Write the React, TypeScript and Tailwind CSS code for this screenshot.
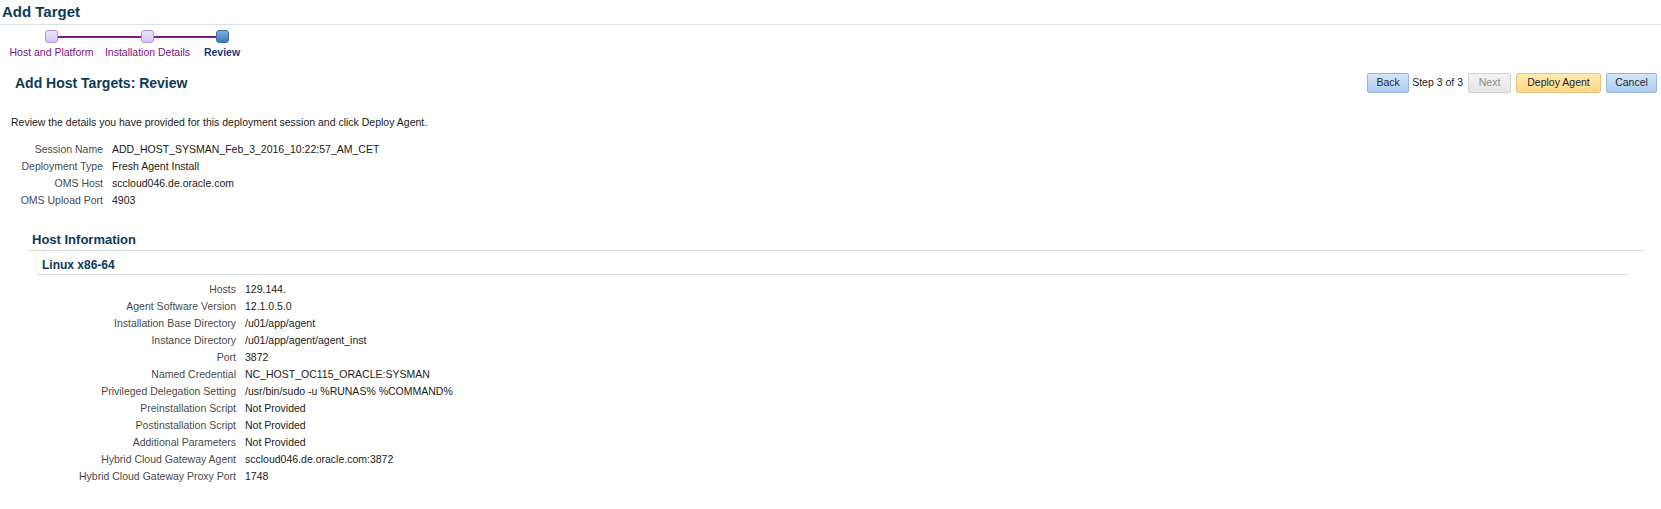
import React from "react";

const topRows: [string, string][] = [
  ["Session Name", "ADD_HOST_SYSMAN_Feb_3_2016_10:22:57_AM_CET"],
  ["Deployment Type", "Fresh Agent Install"],
  ["OMS Host", "sccloud046.de.oracle.com"],
  ["OMS Upload Port", "4903"],
];

const hostRows: [string, string][] = [
  ["Hosts", "129.144."],
  ["Agent Software Version", "12.1.0.5.0"],
  ["Installation Base Directory", "/u01/app/agent"],
  ["Instance Directory", "/u01/app/agent/agent_inst"],
  ["Port", "3872"],
  ["Named Credential", "NC_HOST_OC115_ORACLE:SYSMAN"],
  ["Privileged Delegation Setting", "/usr/bin/sudo -u %RUNAS% %COMMAND%"],
  ["Preinstallation Script", "Not Provided"],
  ["Postinstallation Script", "Not Provided"],
  ["Additional Parameters", "Not Provided"],
  ["Hybrid Cloud Gateway Agent", "sccloud046.de.oracle.com:3872"],
  ["Hybrid Cloud Gateway Proxy Port", "1748"],
];

function KV({ rows, labelW }: { rows: [string, string][]; labelW: string }) {
  return (
    <div className={`grid ${labelW} gap-x-[9px]`}>
      {rows.map(([k, v]) => (
        <React.Fragment key={k}>
          <div className="text-right text-[#4a4a4a] leading-[17px] whitespace-nowrap">{k}</div>
          <div className="text-[#1a1a1a] leading-[17px] whitespace-nowrap">{v}</div>
        </React.Fragment>
      ))}
    </div>
  );
}

function Btn({ children, kind, w }: { children: React.ReactNode; kind: "blue" | "gray" | "yellow"; w: string }) {
  const cls =
    kind === "blue"
      ? "bg-gradient-to-b from-[#d3e5f8] to-[#aecdf0] border-[#92b6dc] text-[#1c2733]"
      : kind === "yellow"
      ? "bg-gradient-to-b from-[#ffeab0] to-[#ffd783] border-[#e8c57c] text-[#1c2733]"
      : "bg-gradient-to-b from-[#f3f3f3] to-[#e6e6e6] border-[#d2d2d2] text-[#8c8c8c]";
  return (
    <div className={`${w} h-[20px] flex items-center justify-center rounded-[2px] border ${cls}`}>{children}</div>
  );
}

function Step({ label, w, ml, state }: { label: string; w: string; ml: string; state: "done" | "current" }) {
  return (
    <div className={`${w} ${ml} flex flex-col items-center relative z-10`}>
      {state === "done" ? (
        <div className="w-[13px] h-[13px] rounded-[3px] border border-[#ad93dc] bg-gradient-to-b from-[#ece4fb] to-[#d6c8f3]" />
      ) : (
        <div className="w-[13px] h-[13px] rounded-[3px] border border-[#3d6ea6] bg-gradient-to-b from-[#7fb0e0] to-[#3f78b8]" />
      )}
      <div
        className={`mt-[3px] leading-[13px] whitespace-nowrap ${
          state === "done" ? "text-[#7a117f]" : "text-[#1b3a78] font-bold"
        }`}
      >
        {label}
      </div>
    </div>
  );
}

export default function App() {
  return (
    <div className="w-[1661px] h-[509px] bg-white text-[10.5px] font-['Liberation_Sans',Arial,sans-serif] overflow-hidden">
      <div className="h-[25px] border-b border-[#d9e0e8] pl-[2px] text-[15px] leading-[20px] pt-[2px] font-bold text-[#0b3b5b]">
        Add Target
      </div>
      <div className="relative flex pl-[7px] pt-[5px]">
        <div className="absolute left-[52px] top-[11px] w-[171px] h-[2px] bg-[#7f1a86]" />
        <Step label="Host and Platform" w="w-[89px]" ml="" state="done" />
        <Step label="Installation Details" w="w-[97px]" ml="ml-[3px]" state="done" />
        <Step label="Review" w="w-[48px]" ml="ml-[2px]" state="current" />
      </div>
      <div className="mt-[11px] h-[26px] flex items-center">
        <div className="pl-[15px] text-[14px] font-bold text-[#0b3b5b] flex-1">Add Host Targets: Review</div>
        <div className="flex items-center pr-[4px] text-[#222]">
          <Btn kind="blue" w="w-[42px]">Back</Btn>
          <div className="ml-[3px] mr-[5px] whitespace-nowrap">Step 3 of 3</div>
          <Btn kind="gray" w="w-[43px]">Next</Btn>
          <div className="w-[5px]" />
          <Btn kind="yellow" w="w-[85px]">Deploy Agent</Btn>
          <div className="w-[5px]" />
          <Btn kind="blue" w="w-[51px]">Cancel</Btn>
        </div>
      </div>
      <div className="mt-[20px] pl-[11px] leading-[13px] text-[#1a1a1a]">
        Review the details you have provided for this deployment session and click Deploy Agent.
      </div>
      <div className="mt-[12px]">
        <KV rows={topRows} labelW="grid-cols-[103px_1fr]" />
      </div>
      <div className="mt-[22px] ml-[27px] mr-[16px]">
        <div className="h-[20px] border-b border-[#d6dfe8] pl-[5px] pt-[1px] text-[13px] leading-[16px] font-bold text-[#0b3b5b]">
          Host Information
        </div>
        <div className="ml-[10px] mr-[16px]">
          <div className="h-[24px] border-b border-[#d6dfe8] pl-[5px] pt-[6px] text-[12px] leading-[16px] font-bold text-[#0b3b5b]">
            Linux x86-64
          </div>
          <div className="mt-[6px]">
            <KV rows={hostRows} labelW="grid-cols-[199px_1fr]" />
          </div>
        </div>
      </div>
    </div>
  );
}
